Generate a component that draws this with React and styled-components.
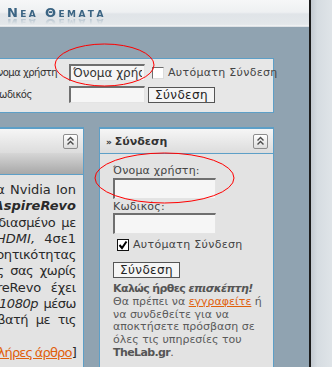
import React from "react";
import styled, { createGlobalStyle } from "styled-components";

const GlobalStyle = createGlobalStyle`
  html, body {
    margin: 0;
    padding: 0;
  }
  body {
    width: 332px;
    height: 367px;
    overflow: hidden;
    font-family: "DejaVu Sans", Verdana, sans-serif;
  }
`;

const Page = styled.div`
  position: relative;
  display: flex;
  width: 332px;
  height: 367px;
  overflow: hidden;
`;

const Main = styled.div`
  width: 309px;
  flex: none;
  display: flex;
  flex-direction: column;
  background: #90a3b1;
  overflow: hidden;
`;

const TopBar = styled.header`
  height: 27px;
  flex: none;
  box-sizing: border-box;
  padding: 6px 0 0 7px;
  background: linear-gradient(#f6f7f8 0%, #eef0f2 45%, #e0e4e8 52%, #e3e7ea 90%, #f3f4f5 96%, #cbd2d8 100%);
`;

const Title = styled.h1`
  margin: 0;
  font: bold 13px "DejaVu Sans", sans-serif;
  line-height: 13px;
  font-variant: small-caps;
  letter-spacing: 2.4px;
  color: #3b6483;
  -webkit-box-reflect: below -2px linear-gradient(transparent 45%, rgba(255, 255, 255, 0.35));
`;

const Divider = styled.div`
  width: 2px;
  flex: none;
  background: #1c1c1c;
`;

const Side = styled.div`
  flex: 1;
  background: linear-gradient(90deg, #c3cad1 0%, #d6dce1 30%, #dfe4e8 100%);
`;

const Body = styled.div`
  flex: 1;
  display: flex;
  flex-direction: column;
  gap: 14px;
  padding-top: 31px;
`;

/* top login strip */
const LoginBar = styled.form`
  width: 273px;
  height: 48px;
  margin: 0;
  border: 1px solid #5d9fc7;
  border-left: none;
  background: #e7e7e7;
  display: grid;
  grid-template-columns: 69px 76px auto;
  grid-template-rows: 17px 17px;
  row-gap: 5px;
  align-items: center;
  align-content: start;
  padding-top: 5px;
  box-sizing: content-box;
  font-size: 11px;
  color: #333;
`;

const BarLabel = styled.label`
  margin-left: ${(p) => p.$shift}px;
  white-space: nowrap;
  font: 10px "DejaVu Sans", sans-serif;
  letter-spacing: -0.5px;
  color: #333;
`;

const Field = styled.input`
  box-sizing: border-box;
  width: ${(p) => p.$w || 76}px;
  height: ${(p) => p.$h || 17}px;
  margin: 0;
  padding: 0 2px;
  border-style: solid;
  border-width: 2px 1px 1px 2px;
  border-color: #6f6f6f #e4e4e4 #e4e4e4 #6f6f6f;
  background: #f6f6f6;
  font: 12px "DejaVu Sans", sans-serif;
  color: #333;
  outline: none;
`;

const Check = styled.label`
  display: flex;
  align-items: center;
  gap: 4px;
  margin-left: ${(p) => p.$indent || 0}px;
  white-space: nowrap;
  font-size: 11px;
  color: #444;
  letter-spacing: 0.3px;
`;

const Box = styled.span`
  width: 12px;
  height: 12px;
  box-sizing: border-box;
  flex: none;
  border-style: solid;
  border-width: 1px;
  border-color: ${(p) => (p.$checked ? "#111" : "#6f6f6f #dcdcdc #dcdcdc #6f6f6f")};
  background: #fff;
  display: grid;
  place-items: center;
`;

const Button = styled.button`
  box-sizing: border-box;
  width: 67px;
  height: 16px;
  margin: 0 0 0 ${(p) => p.$indent || 0}px;
  padding: 0;
  border: 1px solid #555;
  background: #f5f5f5;
  font: 12px "DejaVu Sans", sans-serif;
  letter-spacing: 0.4px;
  color: #222;
  line-height: 14px;
`;

/* two columns */
const Columns = styled.div`
  display: flex;
  gap: 15px;
  align-items: flex-start;
`;

const Panel = styled.section`
  width: ${(p) => p.$w}px;
  height: ${(p) => p.$h}px;
  flex: none;
  box-sizing: border-box;
  border: 1px solid #5d9fc7;
  border-top-width: 2px;
  ${(p) => p.$cut && "border-left: none;"}
  background: #e3e3e3;
  display: flex;
  flex-direction: column;
`;

const PanelHead = styled.div`
  height: ${(p) => (p.$line ? 25 : 24)}px;
  box-sizing: border-box;
  flex: none;
  display: flex;
  align-items: center;
  justify-content: space-between;
  padding: 0 5px 0 6px;
  background: linear-gradient(#f6f6f6, #dcdcdc);
  ${(p) => p.$line && "border-bottom: 1px solid #5d9fc7;"}
  font: bold 11px "DejaVu Sans", sans-serif;
  color: #333;
`;

const HeadTitle = styled.span`
  display: flex;
  align-items: center;
  gap: 3px;
  padding-top: 1px;
`;

const Toggle = styled.button`
  width: 15px;
  height: 15px;
  padding: 0;
  margin: 0;
  border: 1px solid #8d8d8d;
  border-radius: 2px;
  background: linear-gradient(#ffffff, #dddddd);
  display: grid;
  place-items: center;
`;

const Band = styled.div`
  height: 22px;
  box-sizing: border-box;
  flex: none;
  background: linear-gradient(#d6d6d6, #a8a8a8);
  border-bottom: 1px solid #5d9fc7;
`;

const Article = styled.div`
  padding: 7px 7px 0 0;
  font-size: 13px;
  line-height: 16.3px;
  color: #2a2a2a;
`;

/* justified lines of a column that is cut on the left: right-aligned, overflow goes left */
const Line = styled.div`
  height: 16.3px;
  display: flex;
  justify-content: flex-end;
  white-space: pre;
  word-spacing: ${(p) => p.$ws || 0}px;
  letter-spacing: ${(p) => p.$ls || 0}px;
`;

const More = styled.a`
  color: #e0600c;
  text-decoration: underline;
`;

const LoginBody = styled.div`
  padding: 11px 0 0 13px;
  display: flex;
  flex-direction: column;
  align-items: flex-start;
  font-size: 11px;
  color: #444;
`;

const Small = styled.label`
  line-height: 12.5px;
  letter-spacing: 0.2px;
  margin-top: ${(p) => p.$top || 0}px;
`;

const Welcome = styled.p`
  margin: 5px 0 0;
  font-size: 11px;
  line-height: 12.8px;
  white-space: nowrap;
  color: #5a5a5a;
  letter-spacing: 0;
  b {
    color: #555;
    letter-spacing: -0.6px;
  }
  a {
    color: #e0600c;
    text-decoration: underline;
  }
`;

const Marks = styled.svg`
  position: absolute;
  left: 0;
  top: 0;
  pointer-events: none;
`;

const Chevrons = () => (
  <svg width="9" height="10" viewBox="0 0 9 10">
    <polyline points="1.5,4.5 4.5,1.5 7.5,4.5" fill="none" stroke="#4a4a4a" strokeWidth="1.4" />
    <polyline points="1.5,8.5 4.5,5.5 7.5,8.5" fill="none" stroke="#4a4a4a" strokeWidth="1.4" />
  </svg>
);

const Tick = () => (
  <svg width="10" height="10" viewBox="0 0 10 10">
    <polyline points="1.5,5 4,8 8.5,1.5" fill="none" stroke="#000" strokeWidth="2" />
  </svg>
);

const lines = [
  { ws: 1, text: "με πλατφόρμα Nvidia Ion" },
  { ws: 0, text: <b><i>Acer AspireRevo</i></b> },
  { ws: 2, ls: -0.3, text: "σχεδιασμένο με" },
  { ws: 5, text: <>θύρα <i>HDMI,</i> 4σε1</> },
  { ws: 0, ls: -0.4, text: "νοητικότητας" },
  { ws: 3, ls: -0.5, text: "υπολογιστής σας χωρίς" },
  { ws: 6, ls: -0.2, text: "AspireRevo έχει" },
  { ws: 2, ls: -0.5, text: <>σε <i>1080p</i> μέσω</> },
  { ws: 4, ls: -0.5, text: "συμβατή με τις" },
  { ws: 0, text: "" },
  { ws: -1, ls: -0.8, text: <>[<More href="#">Πλήρες άρθρο</More>]</> },
];

export default function App() {
  return (
    <Page>
      <GlobalStyle />
      <Main>
        <TopBar>
          <Title>Νεα Θεματα</Title>
        </TopBar>
        <Body>
          <LoginBar>
            <BarLabel $shift={-10}>Όνομα χρήστη</BarLabel>
            <Field defaultValue="Όνομα χρήστη" />
            <Check $indent={7}>
              <Box />
              Αυτόματη Σύνδεση
            </Check>
            <BarLabel $shift={-7}>Κωδικός</BarLabel>
            <Field type="password" />
            <Button type="button" $indent={3}>Σύνδεση</Button>
          </LoginBar>
          <Columns>
            <Panel $w={84} $h={260} $cut>
              <PanelHead>
                <span />
                <Toggle type="button"><Chevrons /></Toggle>
              </PanelHead>
              <Band />
              <Article>
                {lines.map((l, i) => (
                  <Line key={i} $ws={l.ws} $ls={l.ls}>
                    <span>{l.text}</span>
                  </Line>
                ))}
              </Article>
            </Panel>
            <Panel $w={175} $h={241}>
              <PanelHead $line>
                <HeadTitle>
                  <span style={{ fontSize: 9 }}>»</span> Σύνδεση
                </HeadTitle>
                <Toggle type="button"><Chevrons /></Toggle>
              </PanelHead>
              <LoginBody>
                <Small>Όνομα χρήστη:</Small>
                <Field $w={103} $h={21} />
                <Small $top={2}>Κωδικός:</Small>
                <Field type="password" $w={103} $h={21} />
                <Check $indent={4} style={{ marginTop: 4 }}>
                  <Box $checked><Tick /></Box>
                  Αυτόματη Σύνδεση
                </Check>
                <Button type="button" style={{ marginTop: 11 }}>Σύνδεση</Button>
                <Welcome>
                  <b>Καλώς ήρθες <i>επισκέπτη!</i></b>
                  <br />
                  Θα πρέπει να <a href="#">εγγραφείτε</a> ή
                  <br />
                  να συνδεθείτε για να
                  <br />
                  αποκτήσετε πρόσβαση σε
                  <br />
                  όλες τις υπηρεσίες του
                  <br />
                  <b>TheLab.gr</b>.
                </Welcome>
              </LoginBody>
            </Panel>
          </Columns>
        </Body>
      </Main>
      <Divider />
      <Side />
      <Marks width="332" height="367">
        <ellipse cx="104.5" cy="65" rx="49.5" ry="21" fill="none" stroke="#ff0000" strokeWidth="1" />
        <ellipse cx="164.5" cy="178" rx="69.5" ry="25" fill="none" stroke="#ff0000" strokeWidth="1" />
      </Marks>
    </Page>
  );
}
